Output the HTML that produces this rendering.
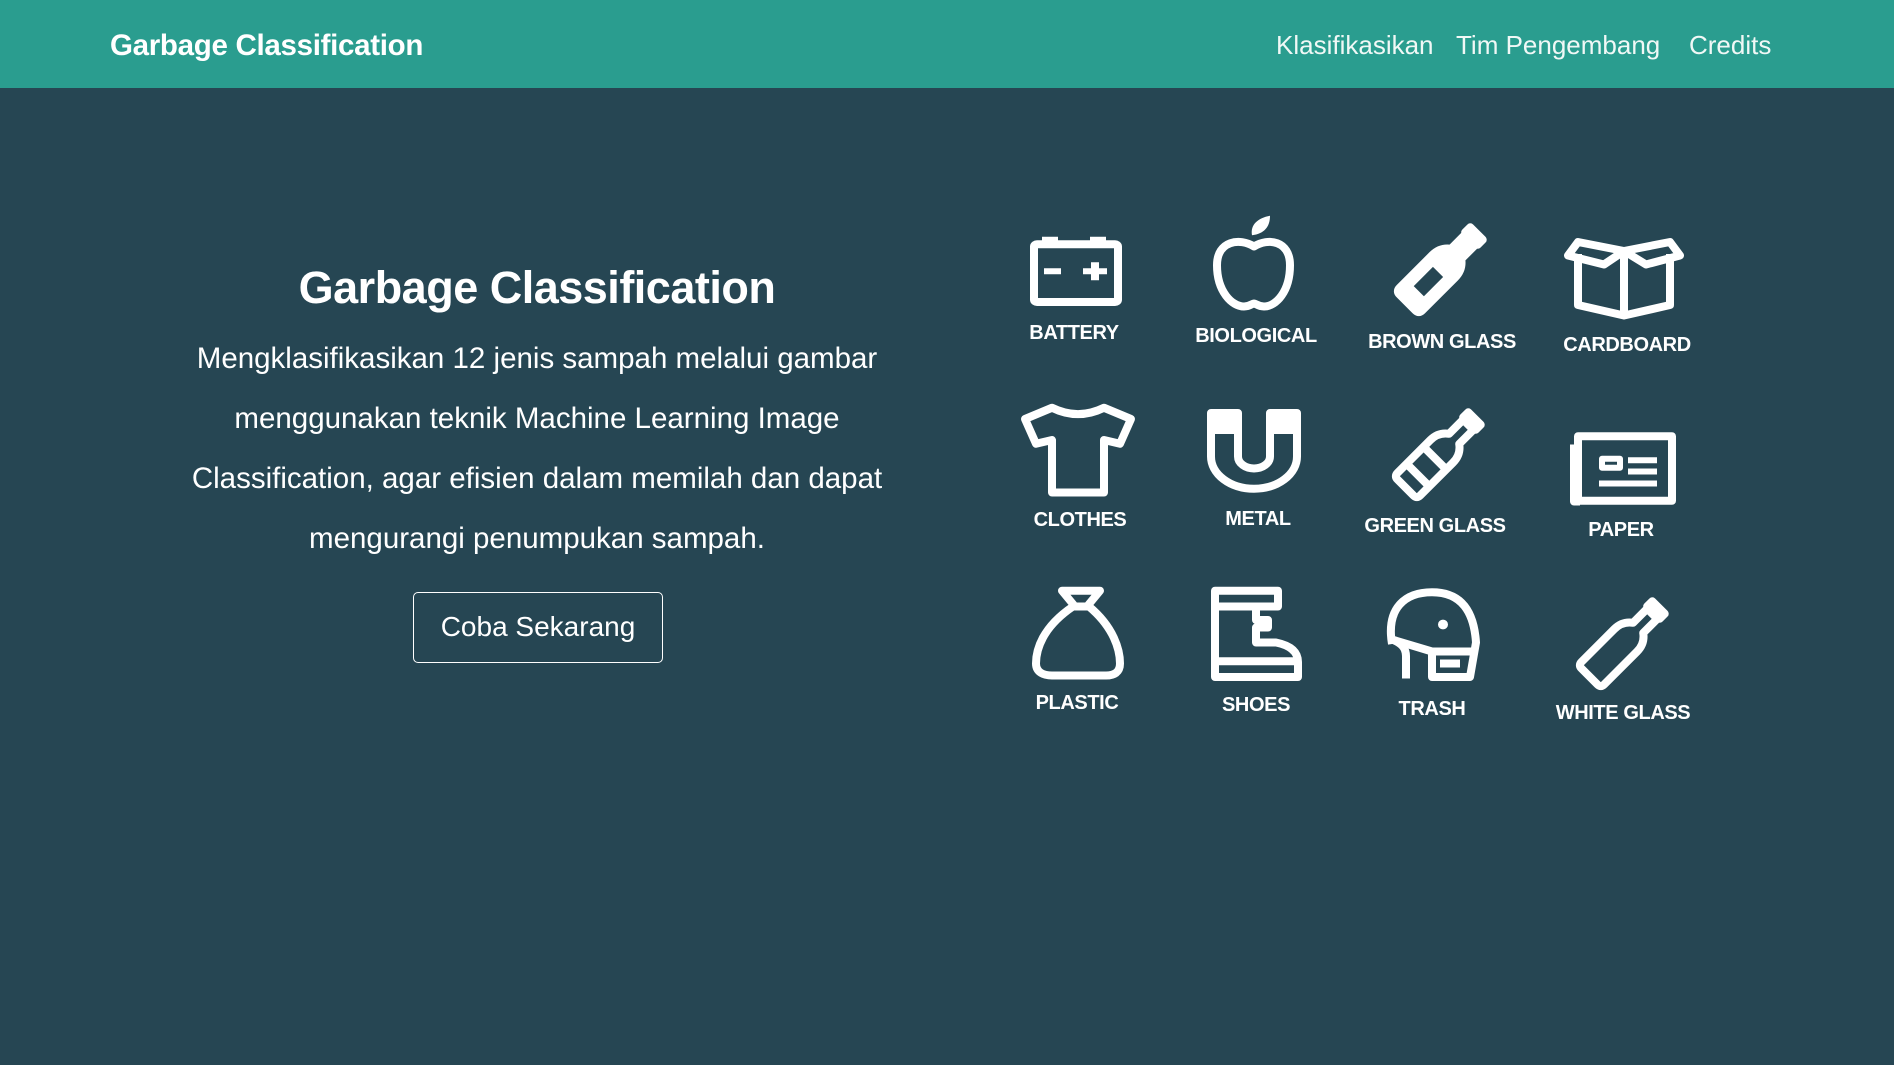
<!DOCTYPE html>
<html><head><meta charset="utf-8"><style>
*{margin:0;padding:0;box-sizing:border-box}
body{width:1894px;height:1065px;background:#264653;font-family:"Liberation Sans",sans-serif;color:#fff;position:relative;overflow:hidden}
.nav{position:absolute;left:0;top:0;width:1894px;height:88px;background:#2a9d8f}
.a{position:absolute;white-space:nowrap}
.brand{left:110px;top:29px;font-size:29.5px;font-weight:bold;letter-spacing:-0.3px}
.lk{top:30px;font-size:26px;color:#f0f8f6}
.title{left:0;width:1074px;text-align:center;top:262px;font-size:45px;font-weight:bold;letter-spacing:-0.5px}
.p{left:0;width:1074px;text-align:center;top:329px;font-size:29.5px;line-height:60px}
.btn{left:413px;top:592px;width:250px;height:71px;border:1.5px solid #fff;border-radius:5px;font-size:28px;text-align:center;line-height:68px}
.lb{font-size:20px;font-weight:bold;transform:translateX(-50%);letter-spacing:-0.4px}
</style></head><body>
<div class="nav"></div>
<div class="a brand">Garbage Classification</div>
<div class="a lk" style="left:1276px">Klasifikasikan</div>
<div class="a lk" style="left:1456px">Tim Pengembang</div>
<div class="a lk" style="left:1689px">Credits</div>
<div class="a title">Garbage Classification</div>
<div class="a p">Mengklasifikasikan 12 jenis sampah melalui gambar<br>menggunakan teknik Machine Learning Image<br>Classification, agar efisien dalam memilah dan dapat<br>mengurangi penumpukan sampah.</div>
<div class="a btn">Coba Sekarang</div>

<svg class="a" style="left:0;top:0" width="1894" height="1065">
<defs>
<path id="bt" d="M-20 60 L-20 2 Q-20 -12 -9 -20 L-9 -45 L9 -45 L9 -20 Q20 -12 20 2 L20 60 Q20 66 14 66 L-14 66 Q-20 66 -20 60 Z"/>
</defs>
<g fill="none" stroke="#fff" stroke-width="10" stroke-linejoin="round">
<g transform="translate(1442 268) rotate(45) scale(0.8) translate(0 -5)">
<use href="#bt" fill="#fff"/>
<rect x="-11" y="-56" width="22" height="9" fill="#fff"/>
<rect x="-9" y="12" width="18" height="34" fill="#264653" stroke="none"/>
</g>
<g transform="translate(1440 453) rotate(45) scale(0.8) translate(0 -5)">
<use href="#bt"/>
<rect x="-11" y="-56" width="22" height="9"/>
<path d="M-20 14 L20 14 M-20 44 L20 44"/>
</g>
<g transform="translate(1624 642) rotate(45) scale(0.8) translate(0 -5)">
<use href="#bt"/>
<rect x="-11" y="-56" width="22" height="9"/>
</g>
</g>
<g transform="translate(0 200) scale(1 0.75) translate(0 -200)" fill="none" stroke="#fff" stroke-width="8" stroke-linejoin="round">
<!-- battery -->
<rect x="1034" y="259" width="84" height="77" rx="3" vector-effect="non-scaling-stroke"/>
<rect x="1042" y="249" width="16" height="10" fill="#fff" stroke="none"/>
<rect x="1090" y="249" width="16" height="10" fill="#fff" stroke="none"/>
<g fill="#fff" stroke="none"><rect x="1044" y="291" width="17" height="8"/><rect x="1083" y="291" width="24" height="8"/><rect x="1091" y="283" width="8" height="24"/></g>
<!-- apple -->
<path vector-effect="non-scaling-stroke" d="M1254 262 C1240 250 1217 254 1217 287 C1217 322 1232 342 1244 342 C1250 342 1252 338 1254 338 C1256 338 1258 342 1264 342 C1276 342 1290 322 1290 287 C1290 254 1268 250 1254 262 Z"/>
<path d="M1252 247 C1250 233 1258 224 1270 221 C1270 236 1264 245 1252 247 Z" fill="#fff" stroke="none"/>
<!-- cardboard -->
<path vector-effect="non-scaling-stroke" d="M1578 272 L1578 340 L1624 354 L1670 340 L1670 272 M1624 268 L1624 354 M1624 268 L1578 256 L1568 274 L1604 286 L1624 268 L1646 286 L1680 274 L1670 256 Z"/>
<!-- shirt -->
<path vector-effect="non-scaling-stroke" d="M1052 477 L1025 492 L1036 525 L1052 520 L1052 590 L1104 590 L1104 520 L1120 525 L1131 492 L1104 477 Q1078 494 1052 477 Z"/>
<!-- magnet -->
<path vector-effect="non-scaling-stroke" d="M1211 484 L1211 542 A43 43 0 0 0 1297 542 L1297 484 L1270 484 L1270 542 A16 16 0 0 1 1238 542 L1238 484 Z"/>
<rect x="1211" y="484" width="27" height="28" fill="#fff" stroke="none"/><rect x="1270" y="484" width="27" height="28" fill="#fff" stroke="none"/>
<!-- paper -->
<rect vector-effect="non-scaling-stroke" x="1578" y="515" width="94" height="86"/>
<path vector-effect="non-scaling-stroke" d="M1574 526 L1574 602 L1580 602"/>
<rect vector-effect="non-scaling-stroke" x="1602" y="545" width="18" height="12" stroke-width="6"/>
<g fill="#fff" stroke="none"><rect x="1628" y="543" width="29" height="8"/><rect x="1628" y="558" width="29" height="8"/><rect x="1599" y="574" width="58" height="8"/></g>
<!-- bag -->
<path vector-effect="non-scaling-stroke" d="M1062 721 L1100 721 L1087 742 L1075 742 Z"/>
<path vector-effect="non-scaling-stroke" d="M1073 742 C1042 770 1036 800 1036 818 C1036 830 1044 834 1052 834 L1106 834 C1114 834 1120 830 1120 818 C1120 800 1114 770 1089 742 Z"/>
<!-- boot -->
<path vector-effect="non-scaling-stroke" d="M1215 721 L1278 721 L1278 742 L1256 742 L1256 760 L1268 760 L1268 770 L1256 770 L1256 790 L1276 790 Q1298 796 1298 816 L1298 836 L1215 836 Z M1215 742 L1256 742 M1215 815 L1298 815"/>
<!-- trash -->
<path vector-effect="non-scaling-stroke" d="M1392 792 C1386 744 1405 723 1432 723 C1462 723 1474 750 1476 790 L1470 836 L1432 836 L1432 802 L1392 786"/>
<path vector-effect="non-scaling-stroke" d="M1392 786 C1400 790 1406 796 1406 808 L1406 838"/>
<path vector-effect="non-scaling-stroke" d="M1432 802 L1474 802 M1440 818 L1460 818"/>
<ellipse cx="1443" cy="766" rx="5" ry="6.5" fill="#fff" stroke="none"/>
</g>
</svg>

<div class="a lb" style="left:1074px;top:322px">BATTERY</div>
<div class="a lb" style="left:1256px;top:325px">BIOLOGICAL</div>
<div class="a lb" style="left:1442px;top:331px">BROWN GLASS</div>
<div class="a lb" style="left:1627px;top:334px">CARDBOARD</div>
<div class="a lb" style="left:1080px;top:509px">CLOTHES</div>
<div class="a lb" style="left:1258px;top:508px">METAL</div>
<div class="a lb" style="left:1435px;top:515px">GREEN GLASS</div>
<div class="a lb" style="left:1621px;top:519px">PAPER</div>
<div class="a lb" style="left:1077px;top:692px">PLASTIC</div>
<div class="a lb" style="left:1256px;top:694px">SHOES</div>
<div class="a lb" style="left:1432px;top:698px">TRASH</div>
<div class="a lb" style="left:1623px;top:702px">WHITE GLASS</div>
</body></html>
